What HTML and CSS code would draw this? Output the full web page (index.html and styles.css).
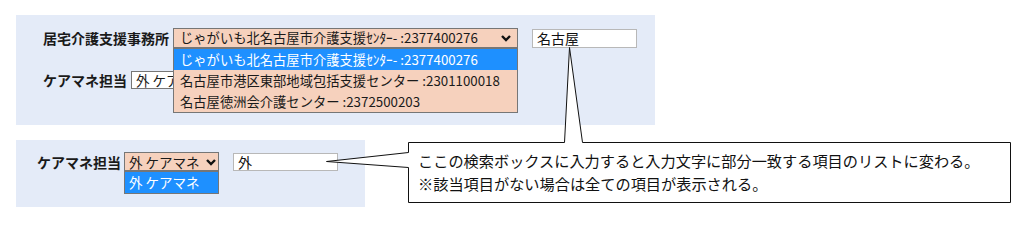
FILE: index.html
```html
<!DOCTYPE html>
<html lang="ja">
<head>
<meta charset="utf-8">
<title>検索ボックス説明</title>
<link rel="stylesheet" href="styles.css">
</head>
<body>
<div class="page">
  <div class="panel panel-top">
    <div class="row row-1">
      <span class="label">居宅介護支援事務所</span>
      <div class="select select-wide">
        <span class="select-text">じゃがいも北名古屋市介護支援ｾﾝﾀｰ- :2377400276</span>
        <svg class="chev" width="10" height="7" viewBox="0 0 10 7"><polyline points="1,1 5,5 9,1" fill="none" stroke="#111" stroke-width="2.4"/></svg>
        <div class="dropdown">
          <div class="option selected">じゃがいも北名古屋市介護支援ｾﾝﾀｰ- :2377400276</div>
          <div class="option">名古屋市港区東部地域包括支援センター :2301100018</div>
          <div class="option">名古屋徳洲会介護センター :2372500203</div>
        </div>
      </div>
      <div class="input input-1">名古屋</div>
    </div>
    <div class="row row-2">
      <span class="label">ケアマネ担当</span>
      <div class="select select-plain">
        <span class="select-text">外 ケアマネ</span>
      </div>
    </div>
  </div>

  <div class="panel panel-bottom">
    <div class="row">
      <span class="label">ケアマネ担当</span>
      <div class="select select-small">
        <span class="select-text">外 ケアマネ</span>
        <svg class="chev" width="10" height="7" viewBox="0 0 10 7"><polyline points="1,1 5,5 9,1" fill="none" stroke="#111" stroke-width="2.4"/></svg>
        <div class="dropdown">
          <div class="option selected">外 ケアマネ</div>
        </div>
      </div>
      <div class="input input-2">外</div>
    </div>
  </div>

  <svg class="callout-shape" width="1033" height="242" viewBox="0 0 1033 242">
    <path d="M408.5 142.5 L564.5 142.5 L569.5 47.5 L582.5 142.5 L1010.5 142.5 L1010.5 202.5 L408.5 202.5 L408.5 167.5 L326.5 161.5 L408.5 152.5 Z" fill="#fff" stroke="#111" stroke-width="1"/>
  </svg>
  <div class="callout-text">
    <p>ここの検索ボックスに入力すると入力文字に部分一致する項目のリストに変わる。</p>
    <p>※該当項目がない場合は全ての項目が表示される。</p>
  </div>
</div>
</body>
</html>
```

FILE: styles.css
```css
html, body {
  margin: 0;
  padding: 0;
  background: #ffffff;
}

body {
  font-family: "Noto Sans CJK JP", "Noto Sans", sans-serif;
  color: #1a1a1a;
}

.page {
  position: relative;
  width: 1033px;
  height: 242px;
  padding: 15px 0 0 16px;
  box-sizing: border-box;
}

.panel {
  background: #e4ebf8;
  box-sizing: border-box;
}

.panel-top {
  width: 639px;
  height: 110px;
  padding: 13px 0 0 27px;
  display: flex;
  flex-direction: column;
  gap: 23px;
}

.panel-bottom {
  width: 349px;
  height: 67px;
  margin-top: 15px;
  padding: 12px 0 0 21px;
}

.row {
  display: flex;
  align-items: center;
}

.label {
  font-size: 14px;
  font-weight: bold;
  line-height: 18px;
  margin-right: 4px;
  white-space: nowrap;
}

.panel-bottom .label {
  margin-right: 3px;
}

.select {
  position: relative;
  box-sizing: border-box;
  border: 1px solid #767676;
  background: #f6d1bd;
  font-size: 13.3px;
  display: flex;
  align-items: center;
  padding-left: 6px;
  white-space: nowrap;
}

.select-wide {
  width: 345px;
  height: 20px;
}

.select-small {
  width: 95px;
  height: 19px;
  padding-left: 4px;
  font-size: 13.5px;
}

.select-plain {
  width: 95px;
  height: 18px;
  background: #ffffff;
  padding-left: 4px;
  font-size: 13.5px;
}

.select-text {
  line-height: 16px;
  flex: 1;
  overflow: hidden;
}

.chev {
  position: absolute;
  right: 6px;
  top: 50%;
  margin-top: -3px;
}

.select-small .chev {
  right: 2px;
}

.dropdown {
  position: absolute;
  left: -1px;
  right: -1px;
  top: 100%;
  border: 1px solid #767676;
  background: #f6d1bd;
  z-index: 2;
}

.select-wide .dropdown {
  top: 19px;
}

.select-small .dropdown {
  top: 18px;
}

.option {
  height: 21px;
  line-height: 21px;
  padding-left: 6px;
  font-size: 13.3px;
  white-space: nowrap;
}

.select-small .option {
  padding-left: 4px;
  font-size: 13.5px;
}

.option.selected {
  background: #1e90ff;
  color: #ffffff;
}

.input {
  box-sizing: border-box;
  width: 105px;
  height: 18px;
  border: 1px solid #b8b8b8;
  background: #ffffff;
  margin-left: 14px;
  font-size: 14px;
  line-height: 16px;
  padding-left: 4px;
  color: #111;
}

.input-1 {
  height: 19px;
}

.input-2 {
  margin-left: 14px;
}

.callout-shape {
  position: absolute;
  left: 0;
  top: 0;
  z-index: 3;
  pointer-events: none;
}

.callout-text {
  position: absolute;
  left: 418px;
  top: 149px;
  z-index: 4;
  font-size: 15.2px;
  line-height: 23px;
  color: #111;
}

.callout-text p {
  margin: 0;
  white-space: nowrap;
}
```
